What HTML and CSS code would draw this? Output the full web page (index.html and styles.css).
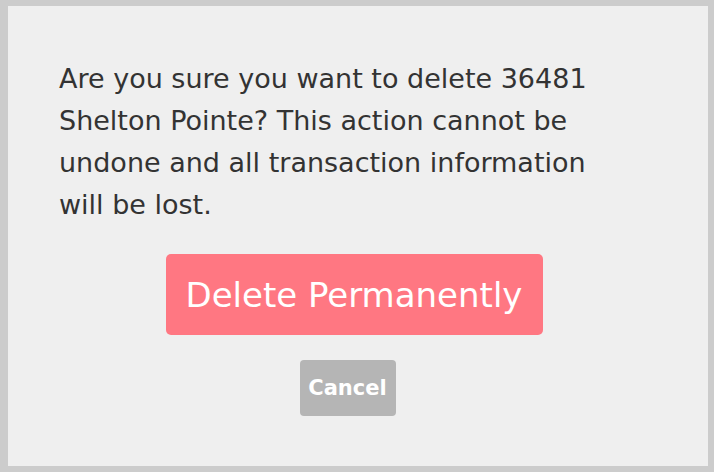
FILE: index.html
```html
<!DOCTYPE html>
<html>
<head>
<meta charset="utf-8">
<link rel="stylesheet" href="styles.css">
</head>
<body>
<div class="panel">
  <p class="message">Are you sure you want to delete 36481 Shelton Pointe? This action cannot be undone and all transaction information will be lost.</p>
  <div class="actions">
    <button class="btn-delete">Delete Permanently</button>
    <button class="btn-cancel">Cancel</button>
  </div>
</div>
</body>
</html>
```
FILE: styles.css
```css
html, body {
  margin: 0;
  height: 100%;
}
body {
  background: #cccccc;
  padding: 6px 6px 6px 8px;
  box-sizing: border-box;
  font-family: "DejaVu Sans", sans-serif;
}
.panel {
  background: #efefef;
  height: 100%;
  box-sizing: border-box;
  padding: 52px 50px 0 51px;
}
.message {
  margin: 0;
  width: 560px;
  font-size: 27px;
  line-height: 42px;
  color: #333333;
}
.actions {
  display: flex;
  flex-direction: column;
  align-items: center;
  margin-top: 28px;
}
.btn-delete {
  font-family: "DejaVu Sans", sans-serif;
  background: #ff7782;
  color: #ffffff;
  border: none;
  border-radius: 5px;
  width: 377px;
  height: 81px;
  font-size: 34px;
  margin-left: -9px;
}
.btn-cancel {
  font-family: "DejaVu Sans", sans-serif;
  font-weight: bold;
  background: #b5b5b5;
  color: #ffffff;
  border: none;
  border-radius: 4px;
  width: 96px;
  height: 56px;
  font-size: 21px;
  margin-top: 25px;
  margin-left: -22px;
}
```
